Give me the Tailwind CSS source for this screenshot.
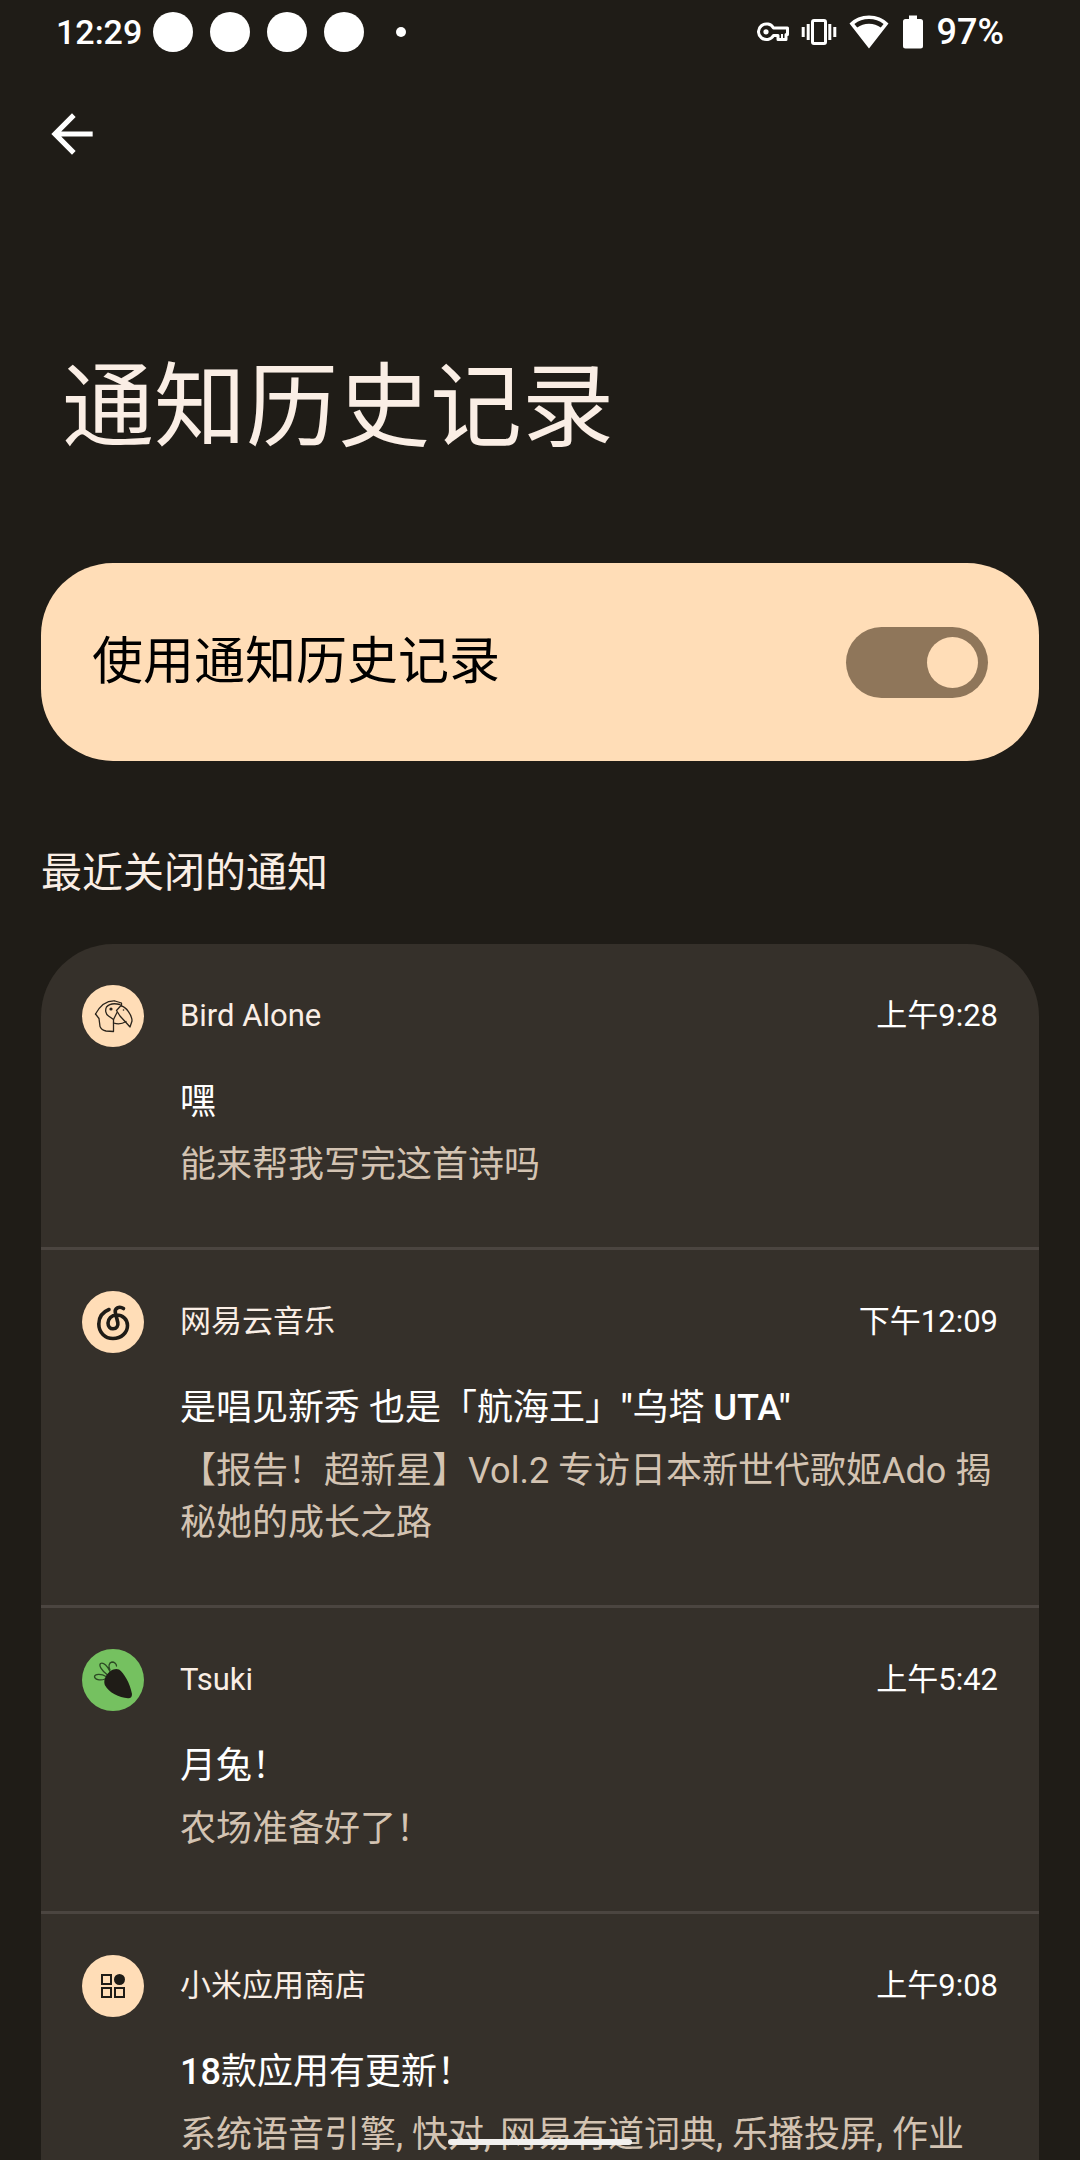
<!DOCTYPE html>
<html lang="zh-CN">
<head>
<meta charset="utf-8">
<meta name="viewport" content="width=device-width, initial-scale=1">
<title>通知历史记录</title>
<script src="https://cdn.jsdelivr.net/npm/@tailwindcss/browser@4"></script>
</head>
<body class="flex h-screen flex-col overflow-hidden bg-[#1f1c17] font-[Roboto,'Noto_Sans_CJK_SC',sans-serif] text-[#faeee5]">

  <!-- Status bar -->
  <div class="flex h-16 shrink-0 items-center justify-between pr-[76px] pl-14 text-[36px] leading-none font-medium text-white">
    <div class="flex items-center">
      <span class="text-[34px]">12:29</span>
      <div class="ml-[11px] flex items-center gap-[17px]">
        <span class="size-10 rounded-full bg-white"></span>
        <span class="size-10 rounded-full bg-white"></span>
        <span class="size-10 rounded-full bg-white"></span>
        <span class="size-10 rounded-full bg-white"></span>
      </div>
      <span class="ml-8 size-[10px] rounded-full bg-white"></span>
    </div>
    <div class="flex items-center">
      <svg class="mr-3 h-5 w-8" viewBox="0 0 32 20" fill="none" stroke="#fff" stroke-width="3" aria-hidden="true">
        <path d="M16.500 6H30.500V12.500H29V17.500H21V13.500H16.500A8 7.800 0 1 1 16.500 6Z" stroke-linejoin="round"/>
        <path d="M25 12V16" stroke-width="2"/>
        <circle cx="9" cy="9.800" r="2.600" fill="#fff" stroke="none"/>
      </svg>
      <svg class="mr-3 h-7 w-9" viewBox="0 0 36 28" fill="none" stroke="#fff" stroke-width="3" aria-hidden="true">
        <rect x="11.500" y="2.500" width="13" height="23" rx="1.500"/>
        <path d="M7.200 6V22M28.800 6V22M2.200 9V19M33.800 9V19"/>
      </svg>
      <svg class="mr-[14px] h-[34px] w-10" viewBox="0 0 40 34" fill="#fff" aria-hidden="true">
        <path d="M20 0.500C12.500 0.500 5.600 3.300 0.500 8.500L20 33.500L39.500 8.500C34.400 3.300 27.500 .5 20 .5ZM20 4C25.500 4 30.500 5.800 34.600 9L31.800 12.600C28.500 10 24.500 8.700 20 8.700S11.500 10 8.200 12.600L5.400 9C9.500 5.800 14.500 4 20 4Z"/>
      </svg>
      <svg class="mr-[14px] h-[34px] w-5" viewBox="0 0 20 34" fill="#fff" aria-hidden="true">
        <path d="M6 .5H14V4H17.500Q20 4 20 6.500V31Q20 33.500 17.500 33.500H2.500Q0 33.500 0 31V6.500Q0 4 2.500 4H6Z"/>
      </svg>
      <span>97%</span>
    </div>
  </div>

  <header class="shrink-0 px-[41px] pt-[39px]">
    <button type="button" aria-label="返回" class="block size-[62px]">
      <svg class="size-full" viewBox="0 0 24 24" fill="#fff" aria-hidden="true">
        <path d="M20 11H7.830L13.420 5.410L12 4L4 12L12 20L13.410 18.590L7.830 13H20V11Z"/>
      </svg>
    </button>
    <h1 class="mt-[179px] px-[21px] text-[92px] leading-[128px]">通知历史记录</h1>
  </header>

  <main class="min-h-0 grow overflow-hidden px-[41px] pt-[91px]">
    <label class="flex h-[198px] items-center justify-between rounded-[72px] bg-[#ffddb7] px-[51px] text-[51px] text-black">
      <span>使用通知历史记录</span>
      <input type="checkbox" role="switch" checked class="flex h-[71px] w-[142px] appearance-none items-center justify-start rounded-full bg-[#8f765a] px-[10px] before:size-[51px] before:rounded-full before:bg-[#ffddb7] checked:justify-end">
    </label>

    <h2 class="mt-[82px] text-[41px] leading-[60px]">最近关闭的通知</h2>

    <ul class="mt-[41px] rounded-t-[72px] bg-[#35302a]">
      <li class="border-b-3 border-[#4b4540] px-[41px] pt-[41px] pb-14">
        <div class="flex h-[62px] items-center text-[31px]">
          <svg class="mr-9 size-[62px] shrink-0" viewBox="0 0 62 62" fill="none" stroke="#2a241c" stroke-width="1.300" stroke-linejoin="round" stroke-linecap="round" aria-hidden="true">
            <circle cx="31" cy="31" r="31" fill="#ffddb7" stroke="none"/>
            <path d="M13.500 29C18 21 25 15.500 33 16L39.500 18V21C44 22 50 30 50 36L48 42L44 37.500L38 31L34.500 25.500L39 20.500"/>
            <path d="M13.500 29L17 33.500L18 41.500C19 44 21 45.500 24 46L31.500 46.500V34.500L35 27.500"/>
            <path d="M38 19.500C32 18 27 19 24.500 22C23 25 23.500 29 26.500 31L31.500 34.500M31.500 38C36 39.500 41 38.500 44 36.500"/>
            <circle cx="29" cy="24" r="1.600" fill="#2a241c" stroke="none"/>
            <circle cx="41.500" cy="25" r=".8" fill="#2a241c" stroke="none"/>
          </svg>
          <span class="grow">Bird Alone</span>
          <time class="text-white">上午9:28</time>
        </div>
        <div class="pt-[29px] pl-[98px] text-[36px] leading-[52px]">
          <h3 class="text-white">嘿</h3>
          <p class="mt-[11px] text-[#d3c3b2]">能来帮我写完这首诗吗</p>
        </div>
      </li>

      <li class="border-b-3 border-[#4b4540] px-[41px] pt-[41px] pb-14">
        <div class="flex h-[62px] items-center text-[31px]">
          <svg class="mr-9 size-[62px] shrink-0" viewBox="0 0 62 62" fill="none" stroke="#1f1c17" stroke-width="3.600" stroke-linecap="round" aria-hidden="true">
            <circle cx="31" cy="31" r="31" fill="#ffddb7" stroke="none"/>
            <path d="M27 18.500C20.500 21 16.800 26.500 16.800 33C16.800 41.500 23 47.500 31 47.500C39.500 47.500 45.500 41.500 45.500 34.500C45.500 28 40.500 24 34.500 24C29.500 24 26 28 26 32C26 35.500 28.200 37.800 31 37.800C34.500 37.800 36.500 35 35.800 31.500L33.300 21.500C32.500 17.500 37 14.500 41.500 17.500"/>
          </svg>
          <span class="grow">网易云音乐</span>
          <time class="text-white">下午12:09</time>
        </div>
        <div class="pt-[29px] pl-[98px] text-[36px] leading-[52px]">
          <h3 class="text-white">是唱见新秀 也是「航海王」<span class="font-medium">"</span>乌塔 <span class="font-medium">UTA"</span></h3>
          <p class="mt-[11px] text-[#d3c3b2]">【报告！超新星】Vol.2 专访日本新世代歌姬Ado 揭秘她的成长之路</p>
        </div>
      </li>

      <li class="border-b-3 border-[#4b4540] px-[41px] pt-[41px] pb-14">
        <div class="flex h-[62px] items-center text-[31px]">
          <svg class="mr-9 size-[62px] shrink-0" viewBox="0 0 62 62" fill="none" stroke="#2c4a24" stroke-width="1.300" stroke-linecap="round" aria-hidden="true">
            <circle cx="31" cy="31" r="31" fill="#75c160" stroke="none"/>
            <path d="M23 30C18 32 12.500 30.500 12.500 27.500C13 24.500 20 25 24 27.500M25 25.500C20 22 16.500 16.500 18.500 14.500C21.500 12.500 26 18 28 22.500M28 21C26 17.500 27 13.500 30 13C32.500 13 34.500 15 34.500 17"/>
            <path d="M24 27C27 21.500 33 18.500 37 20.500C42 24 48 34 50 45C50 48.500 48.500 49.500 46 49.300C37 48.500 27 44 22.800 36C21.800 33 22.300 30 24 27Z" fill="#1f1c17" stroke="none"/>
          </svg>
          <span class="grow">Tsuki</span>
          <time class="text-white">上午5:42</time>
        </div>
        <div class="pt-[29px] pl-[98px] text-[36px] leading-[52px]">
          <h3 class="text-white">月兔！</h3>
          <p class="mt-[11px] text-[#d3c3b2]">农场准备好了！</p>
        </div>
      </li>

      <li class="px-[41px] pt-[41px] pb-14">
        <div class="flex h-[62px] items-center text-[31px]">
          <svg class="mr-9 size-[62px] shrink-0" viewBox="0 0 62 62" fill="none" stroke="#1f1c17" stroke-width="2" aria-hidden="true">
            <circle cx="31" cy="31" r="31" fill="#ffddb7" stroke="none"/>
            <path d="M20 20H29V29H20ZM20 33H29V42H20ZM33 33H42V42H33Z"/>
            <circle cx="37.500" cy="24.500" r="5.500" fill="#1f1c17" stroke="none"/>
          </svg>
          <span class="grow">小米应用商店</span>
          <time class="text-white">上午9:08</time>
        </div>
        <div class="pt-[29px] pl-[98px] text-[36px] leading-[52px]">
          <h3 class="text-white"><span class="font-medium">18</span>款应用有更新！</h3>
          <p class="mt-[11px] text-[#d3c3b2]">系统语音引擎, 快对, 网易有道词典, 乐播投屏, 作业</p>
        </div>
      </li>
    </ul>
  </main>

  <!-- Gesture handle floating above the list -->
  <div class="fixed inset-x-0 bottom-[15px] mx-auto h-[6px] w-[184px] rounded-full bg-[#f2f0ee]"></div>
</body>
</html>
